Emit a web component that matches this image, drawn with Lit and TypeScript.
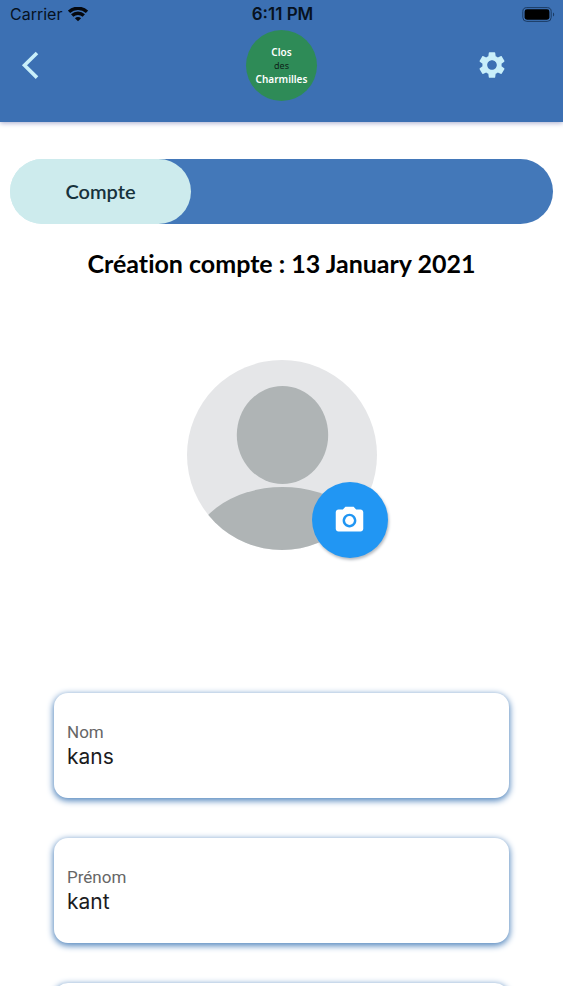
import { LitElement, html, css } from "lit";
import { customElement, property } from "lit/decorators.js";

@customElement("status-bar")
class StatusBar extends LitElement {
  static styles = css`
    :host {
      display: grid;
      grid-template-columns: 1fr auto 1fr;
      align-items: center;
      height: 28px;
      padding: 0 8px 0 10px;
      font: 400 16px/20px Inter, sans-serif;
      color: #07121f;
    }
    .carrier {
      display: flex;
      align-items: center;
      gap: 6px;
    }
    .time {
      font-size: 17px;
      font-weight: 600;
    }
    .battery {
      justify-self: end;
    }
    svg {
      display: block;
    }
  `;

  render() {
    return html`
      <div class="carrier">
        <span>Carrier</span>
        <svg width="20" height="15" viewBox="0 0 20 15" fill="none" stroke="#05080d" stroke-width="3.4" aria-hidden="true">
          <path d="M1 4.800C6 .2 14 .2 19 4.800" />
          <path d="M4.200 8.500C7.500 5.400 12.500 5.400 15.800 8.500" />
          <path d="M10 14.200 6.900 11.200C8.700 9.700 11.300 9.700 13.100 11.200Z" fill="#05080d" stroke="none" />
        </svg>
      </div>
      <span class="time">6:11 PM</span>
      <svg class="battery" width="33" height="15" viewBox="0 0 33 15" aria-hidden="true">
        <rect x=".8" y=".6" width="28.4" height="13.8" rx="4" fill="none" stroke="#1b3b63" />
        <rect x="2.6" y="2.3" width="24.8" height="10.4" rx="2.4" fill="#000" />
        <path d="M31 5.5c1.6.6 1.6 3.4 0 4z" fill="#1b3b63" />
      </svg>
    `;
  }
}

@customElement("profile-field")
class ProfileField extends LitElement {
  @property() label = "";
  @property() value = "";

  static styles = css`
    :host {
      display: block;
    }
    .card {
      display: flex;
      flex-direction: column;
      box-sizing: border-box;
      height: 105px;
      padding: 28px 13px 0;
      border-radius: 14px;
      background: #fff;
      box-shadow: 0 2px 6px 1px #5a8bc0;
    }
    label {
      font: 400 17px/23px Roboto, sans-serif;
      color: #666;
    }
    input {
      width: 100%;
      height: 26px;
      padding: 0;
      border: 0;
      outline: 0;
      background: none;
      font: 400 21px/26px Inter, sans-serif;
      color: #1c1c1e;
    }
  `;

  render() {
    return html`
      <div class="card">
        <label for="field">${this.label}</label>
        <input id="field" type="text" .value=${this.value} />
      </div>
    `;
  }
}

@customElement("app-root")
class AppRoot extends LitElement {
  static styles = css`
    :host {
      display: flex;
      flex-direction: column;
      box-sizing: border-box;
      height: 100vh;
      padding-bottom: 14px;
      background: #fff;
      font-family: Lato, sans-serif;
      font-variant-ligatures: none;
    }
    button {
      display: grid;
      place-items: center;
      padding: 0;
      border: 0;
      background: none;
      cursor: pointer;
    }
    svg {
      display: block;
    }
    header {
      flex: none;
      background: #3c70b3;
      box-shadow: 0 1px 5px #a4a8cc;
    }
    .bar {
      display: grid;
      grid-template-columns: 1fr auto 1fr;
      align-items: center;
      height: 74px;
      padding: 0 12px 20px;
    }
    .icon {
      width: 36px;
      height: 40px;
    }
    .settings {
      justify-self: end;
      margin-right: 41px;
    }
    .logo {
      display: flex;
      flex-direction: column;
      align-items: center;
      justify-content: center;
      width: 71px;
      height: 71px;
      border-radius: 50%;
      background: #2e8b57;
      font: 600 10px/14px "Noto Sans", sans-serif;
      color: #fff;
    }
    .logo small {
      font-size: 9px;
      font-weight: 400;
      line-height: 13px;
      color: #0d2417;
    }
    main {
      flex: 1;
      min-height: 0;
      overflow: hidden;
      padding: 37px 10px 0;
    }
    .tabs {
      display: grid;
      grid-template-columns: repeat(3, 1fr);
      height: 65px;
      overflow: hidden;
      border-radius: 33px;
      background: linear-gradient(90deg, #cdebed 20%, #4378b9 20%);
    }
    .tab {
      padding-bottom: 2px;
      border-radius: 0 33px 33px 0;
      background: #cdebed;
      font: 600 20px/24px Lato, sans-serif;
      color: #17323c;
    }
    h1 {
      margin: 23px 0 81px;
      font-size: 25px;
      font-weight: 700;
      line-height: 32px;
      text-align: center;
      color: #000;
    }
    .avatar {
      position: relative;
      width: 190px;
      margin: 0 auto 143px;
    }
    .camera {
      position: absolute;
      right: -11px;
      bottom: -8px;
      width: 76px;
      height: 76px;
      border-radius: 50%;
      background: #2196f3;
      box-shadow: 1px 2px 3px #b5bac0;
    }
    form {
      display: grid;
      gap: 40px;
      margin: 0 44px;
    }
  `;

  render() {
    return html`
      <header>
        <status-bar></status-bar>
        <div class="bar">
          <button class="icon" aria-label="Retour">
            <svg width="36" height="36" viewBox="0 0 36 36" fill="none" stroke="#c9effa" stroke-width="3.6">
              <path d="M25 6 12.500 18.300 25 30.600" />
            </svg>
          </button>
          <div class="logo"><span>Clos</span><small>des</small><span>Charmilles</span></div>
          <button class="icon settings" aria-label="Paramètres">
            <svg width="32" height="32" viewBox="0 0 24 24" fill="#c9effa">
              <path d="M19.140 12.940c.04-.3.06-.61.06-.94 0-.32-.02-.64-.07-.94l2.030-1.580c.18-.14.23-.41.12-.61l-1.920-3.320c-.12-.22-.37-.29-.59-.22l-2.390.96c-.5-.38-1.030-.7-1.620-.94l-.36-2.540c-.04-.24-.24-.41-.48-.41h-3.840c-.24 0-.43.17-.47.41l-.36 2.540c-.59.24-1.130.57-1.620.94l-2.390-.96c-.22-.08-.47 0-.59.22L2.740 8.870c-.12.21-.08.47.12.61l2.030 1.580c-.05.3-.09.63-.09.94s.02.64.07.94l-2.030 1.580c-.18.14-.23.41-.12.61l1.920 3.320c.12.22.37.29.59.22l2.390-.96c.5.38 1.030.7 1.620.94l.36 2.540c.05.24.24.41.48.41h3.840c.24 0 .44-.17.47-.41l.36-2.540c.59-.24 1.130-.56 1.620-.94l2.390.96c.22.08.47 0 .59-.22l1.920-3.320c.12-.22.07-.47-.12-.61l-2.010-1.580zM12 15.600c-1.980 0-3.600-1.620-3.600-3.600s1.620-3.600 3.600-3.600 3.600 1.620 3.600 3.600-1.620 3.600-3.600 3.600z" />
            </svg>
          </button>
        </div>
      </header>
      <main>
        <nav class="tabs"><button class="tab">Compte</button></nav>
        <h1>Création compte : 13 January 2021</h1>
        <div class="avatar">
          <svg width="190" height="190" viewBox="0 0 190 190" aria-hidden="true">
            <clipPath id="disc"><circle cx="95" cy="95" r="95" /></clipPath>
            <g clip-path="url(#disc)">
              <rect width="190" height="190" fill="#e5e6e8" />
              <ellipse cx="95.500" cy="75" rx="45.700" ry="49" fill="#afb4b5" />
              <ellipse cx="95.500" cy="197" rx="93" ry="70" fill="#afb4b5" />
            </g>
          </svg>
          <button class="camera" aria-label="Changer la photo">
            <svg width="33" height="33" viewBox="0 0 24 24" fill="#fff">
              <circle cx="12" cy="12" r="3.200" />
              <path d="M9 2 7.170 4H4c-1.100 0-2 .9-2 2v12c0 1.100.9 2 2 2h16c1.100 0 2-.9 2-2V6c0-1.100-.9-2-2-2h-3.170L15 2H9zm3 15c-2.760 0-5-2.240-5-5s2.240-5 5-5 5 2.240 5 5-2.240 5-5 5z" />
            </svg>
          </button>
        </div>
        <form>
          <profile-field label="Nom" value="kans"></profile-field>
          <profile-field label="Prénom" value="kant"></profile-field>
          <profile-field></profile-field>
        </form>
      </main>
    `;
  }
}
